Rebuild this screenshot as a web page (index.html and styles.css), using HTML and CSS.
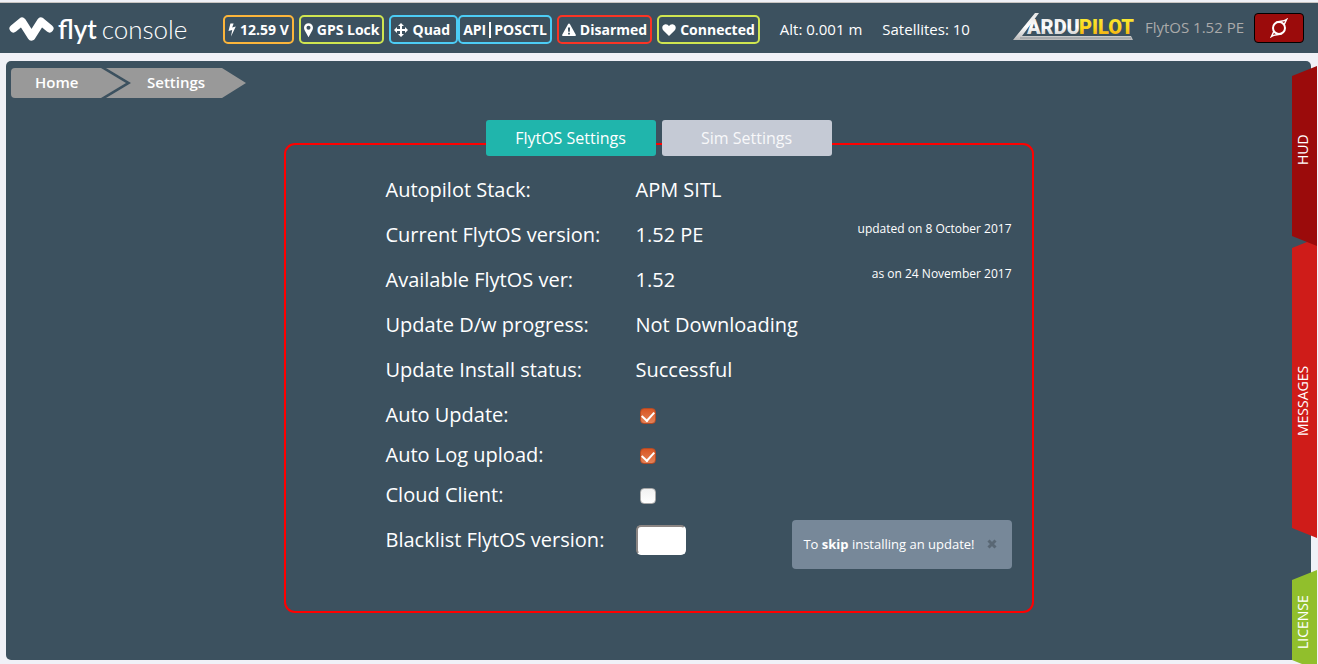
FILE: index.html
```html
<!DOCTYPE html>
<html lang="en">
<head>
<meta charset="utf-8">
<title>FlytConsole - Settings</title>
<link rel="stylesheet" href="styles.css">
</head>
<body>
<header class="topbar">
  <a class="brand" href="#" aria-label="flytconsole">
    <svg class="brand-mark" width="45" height="26" viewBox="0 0 45 26" aria-hidden="true"><path d="M4.500 12.500 13 5.500 22.500 20.500 32 5.500 40.500 12.500" fill="none" stroke="#fff" stroke-width="8" stroke-linecap="round" stroke-linejoin="round"/></svg>
    <span class="brand-name"><b>flyt</b><span>console</span></span>
  </a>
  <div class="badges">
    <span class="badge amber"><svg width="8" height="14" viewBox="0 0 8 14"><path d="M2.400.5h3.200L4.200 4.400 7.800 3.600 3 13.500 4.200 7 .5 8z" fill="#fff"/></svg>12.59 V</span>
    <span class="badge lime"><svg width="9" height="16" viewBox="0 0 8 14"><path fill-rule="evenodd" d="M4 1a4 4 0 0 0-4 4c0 1 .3 1.700.8 2.700L4 13.500l3.200-5.800C7.700 6.700 8 6 8 5a4 4 0 0 0-4-4zm0 2.200a1.800 1.800 0 1 1 0 3.600 1.800 1.800 0 0 1 0-3.600z" fill="#fff"/></svg>GPS Lock</span>
    <span class="badge cyan frame"><svg width="14" height="14" viewBox="0 0 14 14"><path d="M7 0l3 3H8v3h3V4l3 3-3 3V8H8v3h2l-3 3-3-3h2V8H3v2L0 7l3-3v2h3V3H4z" fill="#fff"/></svg>Quad</span>
    <span class="badge cyan joined">API<i class="divider"></i>POSCTL</span>
    <span class="badge red"><svg width="14" height="14" viewBox="0 0 14 14"><path fill-rule="evenodd" d="M7 .5Q7.600.5 8 1.200l5.800 10.600q.5 1.200-.8 1.200H1q-1.300 0-.8-1.200L6 1.200Q6.400.5 7 .5zM5.900 4.500l.3 4.200h1.600l.3-4.200zm.2 5.200v1.800h1.800V9.700z" fill="#fff"/></svg>Disarmed</span>
    <span class="badge lime"><svg width="14" height="14" viewBox="0 0 14 14"><path d="M7 13 1.400 7.600C-.6 5.400 0 1.500 3.500 1.200 5.200 1.100 6.300 2.200 7 3c.7-.8 1.800-1.900 3.500-1.800C14 1.500 14.600 5.400 12.600 7.600z" fill="#fff"/></svg>Connected</span>
  </div>
  <span class="stat">Alt: 0.001 m</span>
  <span class="stat">Satellites: 10</span>
  <div class="system">
    <svg class="autopilot" width="122" height="32" viewBox="0 0 122 32" role="img" aria-label="ArduPilot">
      <defs>
        <linearGradient id="silver" x1="0" y1="0" x2="0" y2="1"><stop offset="0" stop-color="#e4e4e4"/><stop offset=".5" stop-color="#fff"/><stop offset="1" stop-color="#b8b8b8"/></linearGradient>
        <linearGradient id="gold" x1="0" y1="0" x2="0" y2="1"><stop offset="0" stop-color="#f8ee3c"/><stop offset=".55" stop-color="#fbd51b"/><stop offset="1" stop-color="#ef980d"/></linearGradient>
      </defs>
      <path d="M0 31 22 4h4L9 27h109l2 4z" fill="url(#silver)"/>
      <path d="M7 29h111" stroke="#8b9197" stroke-width="1"/>
      <text class="logo-text" x="14" y="25" fill="url(#silver)">ARDU</text>
      <text class="logo-text" x="66" y="25" fill="url(#gold)">PILOT</text>
    </svg>
    <span class="version">FlytOS 1.52 PE</span>
    <button class="link-button" type="button" aria-label="Reconnect"><svg width="18" height="20" viewBox="0 0 18 20"><g fill="none" stroke="#fff"><circle cx="9" cy="10" r="6" stroke-width="2"/><path d="M6 4.500c4-2 7-.5 10.500-3L14 7M12 15.500c-4 2-7 .5-10.500 3L4 13" stroke-width="1.500"/></g></svg></button>
  </div>
</header>

<main class="workspace">
  <nav class="crumbs" aria-label="Breadcrumb">
    <a class="crumb first" href="#">Home</a>
    <a class="crumb last" href="#">Settings</a>
  </nav>
  <div class="tabs">
    <button class="tab active" type="button">FlytOS Settings</button>
    <button class="tab" type="button">Sim Settings</button>
  </div>
  <section class="panel">
    <div class="row"><span>Autopilot Stack:</span><span>APM SITL</span></div>
    <div class="row"><span>Current FlytOS version:</span><span>1.52 PE</span><small>updated on 8 October 2017</small></div>
    <div class="row"><span>Available FlytOS ver:</span><span>1.52</span><small>as on 24 November 2017</small></div>
    <div class="row"><span>Update D/w progress:</span><span>Not Downloading</span></div>
    <div class="row"><span>Update Install status:</span><span>Successful</span></div>
    <div class="row compact"><label for="auto-update">Auto Update:</label><input class="check" id="auto-update" type="checkbox" checked></div>
    <div class="row compact"><label for="auto-log">Auto Log upload:</label><input class="check" id="auto-log" type="checkbox" checked></div>
    <div class="row compact"><label for="cloud">Cloud Client:</label><input class="check" id="cloud" type="checkbox"></div>
    <div class="row last-row"><label for="blacklist">Blacklist FlytOS version:</label><input class="field" id="blacklist" type="text">
      <div class="hint"><p>To <b>skip</b> installing an update!</p><button class="close" type="button" aria-label="Close"><svg width="10" height="10" viewBox="0 0 10 10"><path d="M1.500 1.500l7 7m0-7l-7 7" stroke="#596774" stroke-width="3"/></svg></button></div>
    </div>
  </section>
</main>

<aside class="drawers">
  <button class="drawer hud" type="button">HUD</button>
  <button class="drawer messages" type="button">MESSAGES</button>
  <button class="drawer license" type="button">LICENSE</button>
</aside>
</body>
</html>
```
FILE: styles.css
```css
* { box-sizing: border-box; }
body {
  margin: 0;
  min-height: 100vh;
  display: flex;
  flex-direction: column;
  position: relative;
  overflow: hidden;
  background: #f0f1f7;
  color: #fff;
  font-family: "Open Sans", sans-serif;
}
button, input { font: inherit; color: inherit; margin: 0; }
a { color: inherit; text-decoration: none; }

.topbar {
  display: flex;
  align-items: center;
  height: 51px;
  margin-top: 2px;
  padding: 2px 14px 0 9px;
  border-top: 1px solid #c9c5c2;
  background: #3c515f;
  font-size: 15px;
  line-height: 24px;
  white-space: nowrap;
}
.brand { display: flex; align-items: center; width: 214px; }
.brand-name {
  display: flex;
  gap: 5px;
  margin-left: 4px;
  font-family: Lato, sans-serif;
  font-size: 26px;
  font-weight: 300;
}
.brand-name b { font-weight: 600; }

.badges { display: flex; gap: 5px; }
.badge {
  display: flex;
  align-items: center;
  gap: 4px;
  height: 29px;
  padding: 1px 3px 0;
  border: 2px solid;
  border-radius: 5px;
  font-size: 14px;
  font-weight: 700;
}
.badge.frame { padding-right: 6px; }
.badge.joined { margin-left: -5px; gap: 3px; }
.amber { border-color: #fcb53b; }
.lime { border-color: #cfe550; }
.cyan { border-color: #4cccf5; }
.red { border-color: #fb3425; }
.badge { color: #fff; }
.divider { width: 2px; height: 16px; background: #fff; }
.stat { margin-left: 20px; }

.system { display: flex; align-items: center; margin-left: auto; }
.logo-text { font: 900 20px Roboto, "Liberation Sans", sans-serif; }
.autopilot { margin-bottom: 8px; }
.version { margin: 0 10px 4px 10px; color: #aaa; }
.link-button {
  display: flex;
  align-items: center;
  justify-content: center;
  width: 50px;
  height: 30px;
  margin-bottom: 3px;
  padding: 0;
  border: 1px solid #000;
  border-radius: 4px;
  background: #9b0b0b;
}

.workspace {
  flex: 1;
  display: flex;
  flex-direction: column;
  align-items: center;
  margin: 8px 7px 4px 6px;
  padding: 7px 5px 20px;
  border-radius: 5px;
  background: #3c515f;
}
.crumbs { align-self: stretch; display: flex; height: 30px; font-size: 15px; font-weight: 600; }
.crumb { padding-left: 24px; line-height: 28px; background: #999; }
.crumb.first {
  width: 115px;
  border-radius: 4px 0 0 4px;
  clip-path: polygon(0 0, 90px 0, 100% 50%, 90px 100%, 0 100%);
}
.crumb.last {
  width: 140px;
  margin-left: -20px;
  padding-left: 41px;
  clip-path: polygon(0 0, 116px 0, 100% 50%, 116px 100%, 0 100%, 25px 50%);
}
.tabs { display: flex; gap: 6px; margin-top: 22px; z-index: 1; }
.tab {
  width: 170px;
  height: 36px;
  padding: 0;
  border: 0;
  border-radius: 3px;
  background: #c5cad5;
  color: #f8f8fa;
  font-size: 16px;
}
.tab.active { background: #20b5ac; color: #fff; }

.panel {
  width: 100%;
  max-width: 750px;
  margin-top: -13px;
  padding: 30px 20px 42px 100px;
  border: 2px solid #f00;
  border-radius: 11px;
  font-size: 20px;
  line-height: 30px;
}
.row { display: grid; grid-template-columns: 250px 1fr auto; margin-bottom: 15px; }
.row.compact { margin-bottom: 10px; }
.row small { font-size: 12px; line-height: 18px; }
.check {
  appearance: none;
  width: 16px;
  height: 16px;
  margin: 8px 0 0 4px;
  border: 1px solid #a8a8a8;
  border-radius: 4px;
  background: linear-gradient(#f1f1f1, #fff);
}
.check:checked {
  display: flex;
  align-items: center;
  justify-content: center;
  padding-bottom: 2px;
  border-color: #b54b24;
  background: linear-gradient(#d85624, #e58257);
}
.check:checked::after {
  content: "";
  width: 6px;
  height: 10px;
  border: solid #fff;
  border-width: 0 2px 2px 0;
  transform: rotate(42deg);
}
.row.last-row { margin-bottom: 0; }
.last-row label { padding-top: 5px; }
.field {
  width: 50px;
  height: 30px;
  margin-top: 5px;
  padding: 0 6px;
  border: 2px solid;
  border-color: #8b8583 #fff #fff #8b8583;
  border-radius: 5px;
  background: #fff;
  color: #333;
}
.hint {
  display: flex;
  align-items: center;
  gap: 12px;
  height: 49px;
  padding: 0 15px 2px 11px;
  border-radius: 4px;
  background: #778899;
  font-size: 13px;
}
.hint p { margin: 0; }
.close { display: flex; padding: 0; border: 0; background: none; }

.drawers { position: absolute; top: 66px; right: 1px; width: 25px; z-index: 2; }
.drawer {
  display: flex;
  align-items: center;
  justify-content: center;
  position: relative;
  width: 25px;
  padding: 0 0 0 4px;
  border: 0;
  font-size: 14px;
  writing-mode: vertical-rl;
  transform: rotate(180deg);
  clip-path: polygon(0 0, 100% 10px, 100% calc(100% - 10px), 0 100%);
}
.hud { z-index: 1; height: 180px; padding-top: 12px; background: #9b0b0b; }
.messages { height: 300px; margin-top: -8px; padding-bottom: 26px; background: #cf1c19; }
.license { height: 100px; margin-top: 32px; padding-bottom: 4px; background: #91bf2c; }
```
